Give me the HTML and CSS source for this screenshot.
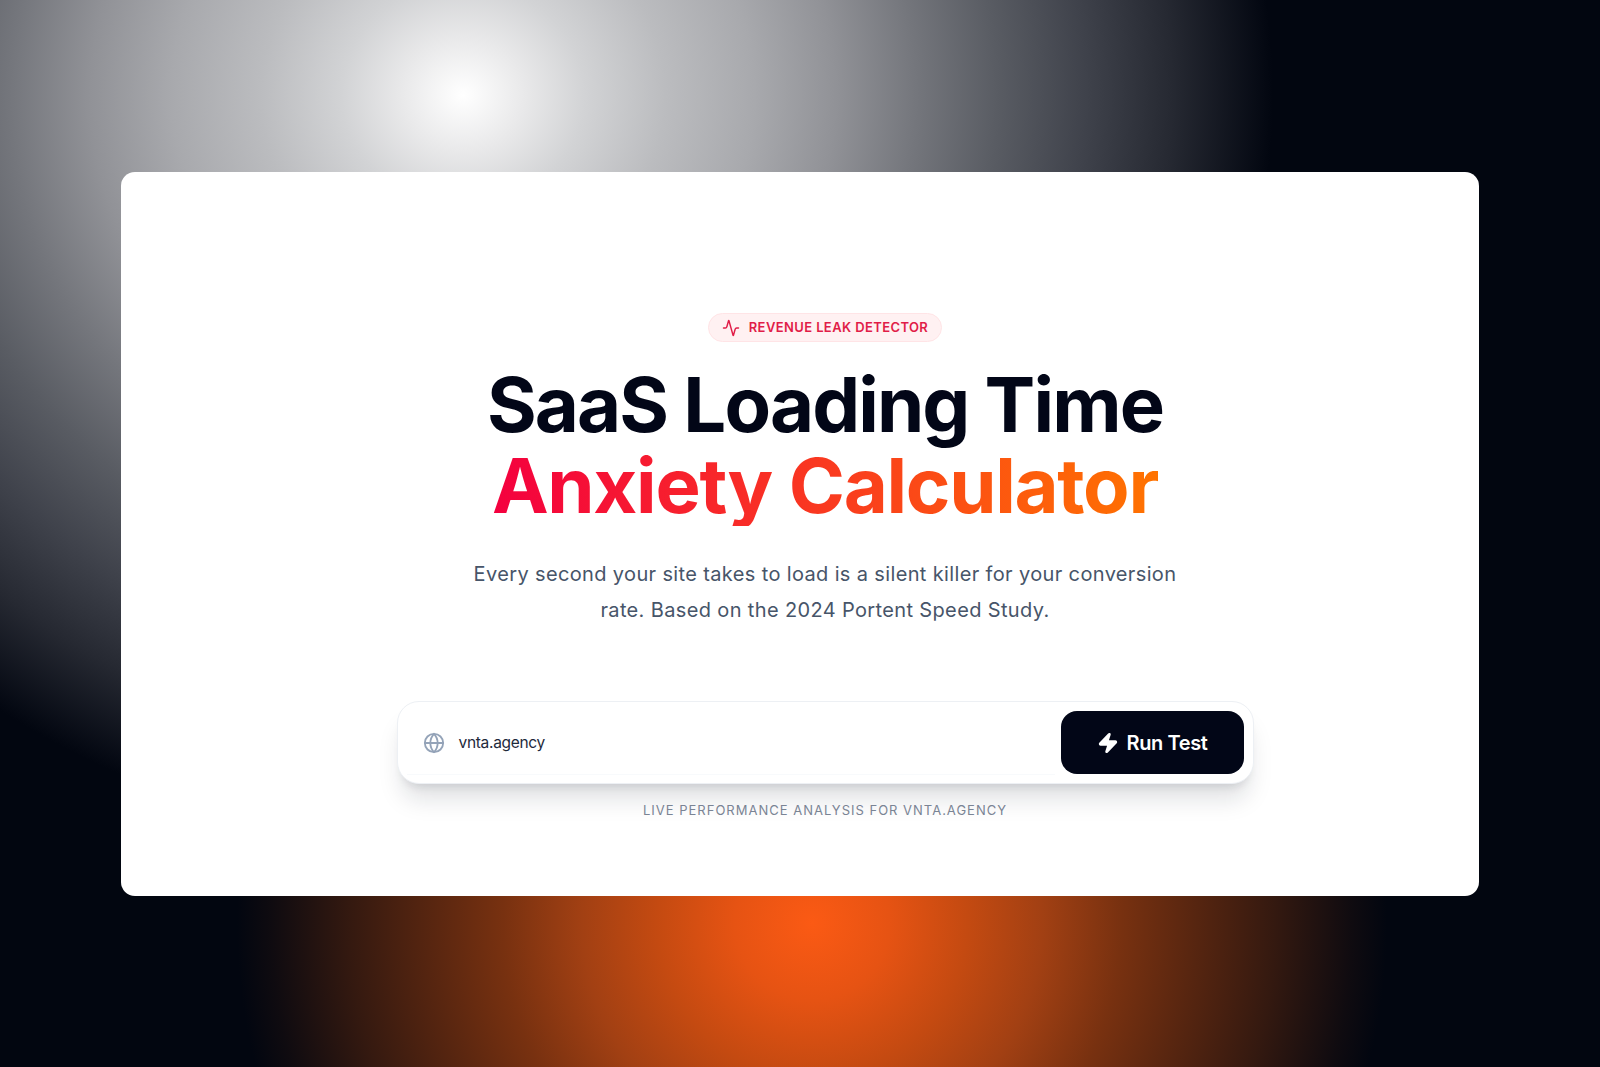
FILE: index.html
```html
<!DOCTYPE html>
<html lang="en">
<head>
<meta charset="utf-8">
<title>SaaS Loading Time Anxiety Calculator</title>
<link rel="stylesheet" href="styles.css">
</head>
<body>
<div class="page">
  <main class="card">
    <div class="badge">
      <svg class="badge-icon" viewBox="0 0 24 24" fill="none" stroke="currentColor" stroke-width="2" stroke-linecap="round" stroke-linejoin="round"><path d="M22 12h-2.48a2 2 0 0 0-1.93 1.46l-2.35 8.36a.25.25 0 0 1-.48 0L9.24 2.18a.25.25 0 0 0-.48 0l-2.35 8.36A2 2 0 0 1 4.49 12H2"/></svg>
      <span class="badge-text">Revenue Leak Detector</span>
    </div>
    <h1 class="title">SaaS Loading Time<span class="accent">Anxiety Calculator</span></h1>
    <p class="lead">Every second your site takes to load is a silent killer for your conversion rate. Based on the 2024 Portent Speed Study.</p>
    <div class="search">
      <div class="field">
        <svg class="globe" viewBox="0 0 24 24" fill="none" stroke="currentColor" stroke-width="2" stroke-linecap="round" stroke-linejoin="round"><circle cx="12" cy="12" r="10"/><path d="M12 2a14.5 14.5 0 0 0 0 20 14.5 14.5 0 0 0 0-20"/><path d="M2 12h20"/></svg>
        <span class="url">vnta.agency</span>
      </div>
      <button class="run" type="button">
        <svg class="bolt" viewBox="0 0 24 24" fill="currentColor" stroke="currentColor" stroke-width="2" stroke-linecap="round" stroke-linejoin="round"><path d="M4 14a1 1 0 0 1-.78-1.63l9.9-10.2a.5.5 0 0 1 .86.46l-1.92 6.02A1 1 0 0 0 13 10h7a1 1 0 0 1 .78 1.63l-9.9 10.2a.5.5 0 0 1-.86-.46l1.92-6.02A1 1 0 0 0 11 14z"/></svg>
        Run Test
      </button>
    </div>
    <p class="note">Live performance analysis for vnta.agency</p>
  </main>
</div>
</body>
</html>
```

FILE: styles.css
```css
* { box-sizing: border-box; }
html, body { margin: 0; height: 100%; }
body {
  font-family: "Inter", "Liberation Sans", sans-serif;
  background: #020610;
  overflow: hidden;
}
.page {
  width: 1600px;
  height: 1067px;
  padding: 172px 121px 171px 121px;
  background:
    radial-gradient(ellipse 810px 750px at 463px 95px, #ffffff 0%, #e9e9ea 7.5%, #d2d3d5 15%, #bbbcbf 25%, #a8a9ad 36%, #919297 46%, #74767c 56%, #595c63 66%, #3f424b 77%, #262932 87.5%, #020610 100%),
    radial-gradient(ellipse 575px 570px at 812px 923px, #fb5a14 0%, #e65313 13.5%, #c44a11 27%, #a24013 40%, #783110 53.7%, #56250f 67%, #34190f 80.5%, #0f0b10 94%, #020610 100%);
  background-color: #020610;
  background-blend-mode: lighten;
}
.card {
  height: 724px;
  background: #ffffff;
  border-radius: 14px;
  padding: 141px 0 0 50px;
  display: flex;
  flex-direction: column;
  align-items: center;
}
.badge {
  display: flex;
  align-items: center;
  gap: 9px;
  height: 29px;
  padding: 0 13px;
  background: #fff1f2;
  border: 1px solid #ffe4e6;
  border-radius: 15px;
  color: #e11d48;
  font-size: 13px;
  font-weight: 600;
  letter-spacing: 0.03em;
  text-transform: uppercase;
}
.badge-icon { width: 18px; height: 18px; }
.badge-text { position: relative; top: -1px; }
.title {
  margin: 22px 0 0;
  font-size: 76px;
  font-weight: 700;
  line-height: 81px;
  letter-spacing: -1.87px;
  color: #020617;
  text-align: center;
}
.accent {
  display: block;
  width: fit-content;
  margin: 0 auto;
  letter-spacing: -1.3px;
  background: linear-gradient(90deg, #f4003f 0%, #ff7300 100%);
  -webkit-background-clip: text;
  background-clip: text;
  color: transparent;
}
.lead {
  margin: 30px 0 0;
  width: 720px;
  font-size: 20px;
  line-height: 36px;
  color: #475569;
  text-align: center;
  letter-spacing: 0.018em;
}
.search {
  margin-top: 73px;
  width: 857px;
  height: 83px;
  padding: 9px;
  display: flex;
  gap: 6px;
  background: #ffffff;
  border: 1px solid #edf0f4;
  border-radius: 22px;
  box-shadow: 0 20px 25px -5px rgba(15,23,42,0.13), 0 8px 10px -6px rgba(15,23,42,0.13);
}
.field {
  flex: 1;
  display: flex;
  align-items: center;
  gap: 14px;
  padding-left: 16px;
  border-bottom: 1px solid #f8fafc;
  height: 64px;
}
.globe { width: 22px; height: 22px; color: #94a3b8; }
.url { font-size: 15.5px; color: #1e293b; letter-spacing: -0.02em; }
.run {
  width: 183px;
  height: 63px;
  display: flex;
  align-items: center;
  justify-content: center;
  gap: 8px;
  background: #020617;
  color: #ffffff;
  border: 0;
  border-radius: 16px;
  font-family: inherit;
  font-size: 20px;
  font-weight: 600;
  letter-spacing: -0.02em;
}
.bolt { width: 22px; height: 22px; }
.note {
  margin: 18px 0 0;
  font-size: 13px;
  color: #7a8494;
  letter-spacing: 1px;
  text-transform: uppercase;
}
```
